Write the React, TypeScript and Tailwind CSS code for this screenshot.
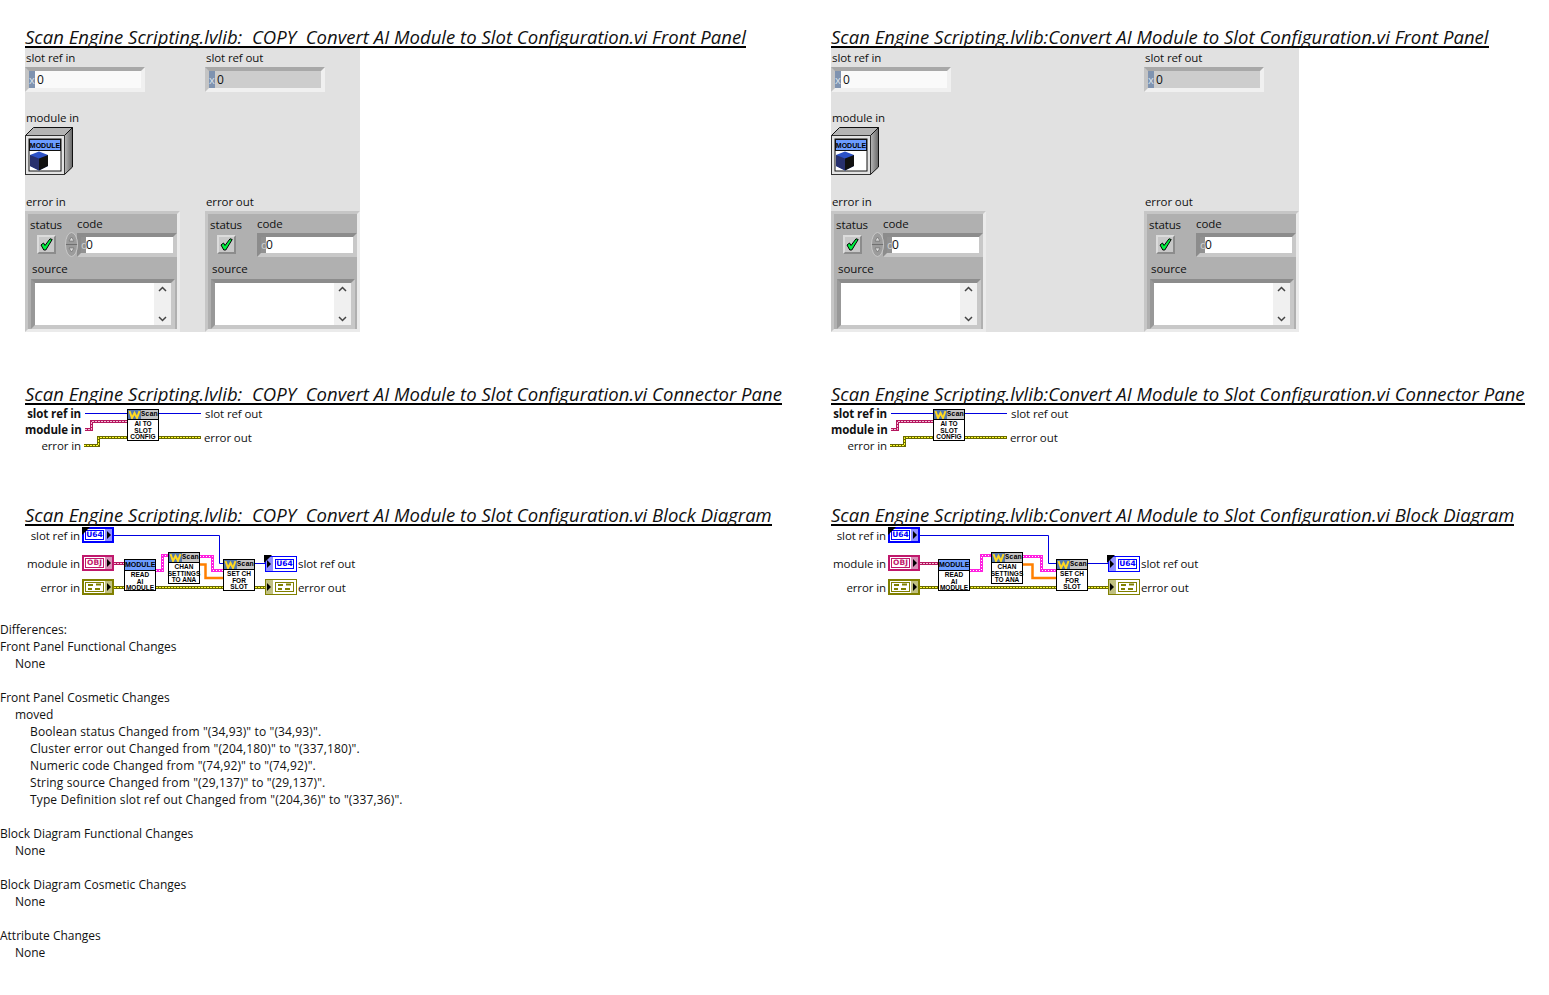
import React from 'react';

const UI_FONT = 'font-["Open_Sans",sans-serif]';

// --- front panel bits ---

const Caption = ({ children }: { children: React.ReactNode }) => (
  <div className="h-[16px] leading-[14px] text-[11.5px] tracking-[-0.1px] text-[#111] whitespace-nowrap">{children}</div>
);

const Label = ({ x, y, children }: { x: number; y: number; children: React.ReactNode }) => (
  <div
    className="absolute h-[16px] leading-[16px] text-[11.5px] tracking-[-0.1px] text-[#111] whitespace-nowrap"
    style={{ left: x, top: y - 8 }}
  >
    {children}
  </div>
);

const RightLabel = ({ y, w, children, bold }: { y: number; w: number; children: React.ReactNode; bold?: boolean }) => (
  <div
    className={`absolute left-0 h-[16px] leading-[16px] text-[11.5px] tracking-[-0.1px] text-[#111] text-right whitespace-nowrap ${bold ? 'font-bold' : ''}`}
    style={{ top: y - 8, width: w }}
  >
    {children}
  </div>
);

const RefNumeric = ({ indicator }: { indicator?: boolean }) => (
  <div
    className={`w-[120px] h-[25px] border-[4px] border-t-[#a8a8a8] border-l-[#c4c4c4] border-r-[#f0f0f0] border-b-[#f0f0f0] flex ${
      indicator ? 'bg-[#cdcdcd]' : 'bg-[#fafafa]'
    }`}
  >
    <div className="w-[6px] h-full bg-[#7f93b0] text-[#d8e0ea] text-[11px] leading-[17px] text-center">x</div>
    <div className="pl-[2px] text-[12px] leading-[17px] text-[#111]">0</div>
  </div>
);

const CheckBox = () => (
  <div className="w-[19px] h-[19px] bg-[#c8c8c8] border-[2px] border-t-[#dcdcdc] border-l-[#dcdcdc] border-r-[#8c8c8c] border-b-[#8c8c8c] flex items-center justify-center">
    <svg width="13" height="13" viewBox="0 0 13 13">
      <path d="M1 7 L3.5 5 L5 7.5 L10 0.8 L12.2 1.5 L5.8 12 L3.8 12 Z" fill="#00f040" stroke="#000" strokeWidth="1" />
    </svg>
  </div>
);

const Spinner = () => (
  <svg className="absolute left-[37px] top-[18px]" width="13" height="25" viewBox="0 0 13 25">
    <ellipse cx="6.5" cy="12.5" rx="6" ry="12" fill="#9c9c9c" stroke="#c8c8c8" />
    <path d="M1 12.5 H12" stroke="#707070" />
    <path d="M4 9 L6.5 5 L9 9 Z M4 16 L6.5 20 L9 16 Z" fill="#dcdcdc" stroke="#666" strokeWidth="0.6" />
  </svg>
);

const ErrorCluster = ({ spinner }: { spinner?: boolean }) => (
  <div className="relative w-[155px] h-[121px] bg-[#b0b0b0] border-[3px] border-t-[#c6c6c6] border-l-[#c6c6c6] border-r-[#ebebeb] border-b-[#ebebeb] flex flex-col">
    <div className="flex h-[43px]">
      <div className="w-[49px] pt-[4px] pl-[2px]">
        <Caption>status</Caption>
        <div className="mt-[1px] ml-[7px]">
          <CheckBox />
        </div>
      </div>
      <div className="w-[100px] pt-[3px]">
        <Caption>code</Caption>
        <div className="h-[24px] border-[4px] border-t-[#8c8c8c] border-l-[#8c8c8c] border-r-[#c8c8c8] border-b-[#c8c8c8] flex bg-white">
          <div className="w-[5px] h-full bg-[#919191] text-[#d0d0d0] text-[11px] leading-[16px]">d</div>
          <div className="text-[12px] leading-[16px] text-[#111]">0</div>
        </div>
      </div>
    </div>
    {spinner && <Spinner />}
    <div className="mt-[5px] pl-[4px]">
      <Caption>source</Caption>
    </div>
    <div className="mt-[1px] ml-[3px] w-[144px] h-[50px] border-[4px] border-t-[#8c8c8c] border-l-[#989898] border-r-[#c8c8c8] border-b-[#c8c8c8] bg-white flex justify-end">
      <div className="w-[17px] h-full bg-[#f0f0f0] flex flex-col items-center justify-between py-[3px]">
        <svg width="9" height="6" viewBox="0 0 9 6"><path d="M1 5 L4.5 1.5 L8 5" fill="none" stroke="#444" strokeWidth="1.5" /></svg>
        <svg width="9" height="6" viewBox="0 0 9 6"><path d="M1 1 L4.5 4.5 L8 1" fill="none" stroke="#444" strokeWidth="1.5" /></svg>
      </div>
    </div>
  </div>
);

const ModuleIcon = () => (
  <svg width="48" height="48" viewBox="0 0 48 48" className="block">
    <defs>
      <linearGradient id="side" x1="0" x2="1" y1="0" y2="0">
        <stop offset="0" stopColor="#b8b8b8" />
        <stop offset="1" stopColor="#666" />
      </linearGradient>
    </defs>
    <path d="M0.5 8.5 L8.5 0.5 H47.5 L39.5 8.5 Z" fill="#b4b4b4" stroke="#111" />
    <path d="M39.5 8.5 L47.5 0.5 V40 L39.5 47.5 Z" fill="url(#side)" stroke="#111" />
    <rect x="0.5" y="8.5" width="39" height="39" fill="#e4e4e4" stroke="#333" />
    <rect x="4" y="12" width="32" height="32" fill="#fff" stroke="#111" />
    <rect x="4.5" y="12.5" width="31" height="11" fill="#6c9cff" stroke="#111" />
    <text x="20" y="20.5" textAnchor="middle" fontFamily="'Liberation Sans', sans-serif" fontSize="7" fontWeight="bold" fill="#000">MODULE</text>
    <path d="M5 28 L14 24.5 L23 28 V39 L14 43.5 L5 39 Z" fill="#2c52c8" />
    <path d="M14 31.5 L23 28 V39 L14 43.5 Z" fill="#111" />
    <path d="M5 28 L14 31.5 V43.5 L5 39 Z" fill="#27306e" />
  </svg>
);

const FrontPanel = ({ width, outX }: { width: number; outX: number }) => (
  <div className="flex h-[284px] pt-[3px] bg-[#e1e1e1]" style={{ width }}>
    <div className="shrink-0" style={{ width: outX }}>
      <div className="pl-[1px]"><Caption>slot ref in</Caption></div>
      <RefNumeric />
      <div className="pl-[1px] mt-[19px]"><Caption>module in</Caption></div>
      <ModuleIcon />
      <div className="pl-[1px] mt-[20px]"><Caption>error in</Caption></div>
      <ErrorCluster spinner />
    </div>
    <div className="shrink-0">
      <div className="pl-[1px]"><Caption>slot ref out</Caption></div>
      <RefNumeric indicator />
      <div className="pl-[1px] mt-[103px]"><Caption>error out</Caption></div>
      <ErrorCluster />
    </div>
  </div>
);

// --- block diagram bits ---

const ScanHeader = () => (
  <div className="flex h-[10px] bg-[#c4c4c4] border-b border-black">
    <svg width="13" height="9" viewBox="0 0 13 9" className="shrink-0">
      <rect width="13" height="9" fill="#5478ac" />
      <path d="M1.5 1 L4 8 L6.5 3 L9 8 L11.5 1" fill="none" stroke="#ffd820" strokeWidth="2" />
    </svg>
    <span className="text-[7px] leading-[9px] font-bold text-black font-['Liberation_Mono',monospace]">Scan</span>
  </div>
);

const SubVI = ({ x, y, lines, module }: { x: number; y: number; lines: string[]; module?: boolean }) => (
  <div className="absolute w-[32px] h-[32px] bg-white border border-black" style={{ left: x, top: y }}>
    {module ? (
      <div className="h-[11px] bg-[#6c9cff] border-b border-black text-[7px] leading-[10px] font-bold text-center text-black font-['Liberation_Sans',sans-serif] whitespace-nowrap">
        MODULE
      </div>
    ) : (
      <ScanHeader />
    )}
    <div className="text-[6.5px] leading-[6.5px] pt-[1px] font-bold text-center text-black font-['Liberation_Sans',sans-serif] whitespace-nowrap flex flex-col items-center">
      {lines.map((l) => (
        <span key={l}>{l}</span>
      ))}
    </div>
  </div>
);

const ClusterGlyph = ({ color }: { color: string }) => (
  <svg width="19" height="10" viewBox="0 0 19 10" className="block">
    <rect x="0.5" y="0.5" width="18" height="9" fill="#fff" stroke={color} />
    <path d="M3 3 H8 M11 2.5 H16 M3 7 H7 M10 7 H15" stroke={color} strokeWidth="2" />
  </svg>
);

type TerminalProps = {
  x: number;
  y: number;
  color: string;
  pale: string;
  label?: string;
  cluster?: boolean;
  notch?: boolean;
  out?: boolean;
};

const Terminal = ({ x, y, color, pale, label, cluster, notch, out }: TerminalProps) => (
  <div
    className={`absolute w-[32px] h-[16px] bg-white flex items-center ${out ? 'border' : 'border-[2px]'}`}
    style={{ left: x, top: y, borderColor: color }}
  >
    {out && (
      <div className="w-[7px] h-full shrink-0 flex items-center" style={{ backgroundColor: pale }}>
        <svg width="5" height="8" viewBox="0 0 5 8"><path d="M1 0 L5 4 L1 8 Z" fill="#000" /></svg>
      </div>
    )}
    <div className="flex-1 flex justify-center">
      {cluster ? (
        <ClusterGlyph color={color} />
      ) : (
        <span
          className="w-[19px] h-[10px] border text-center text-[7.5px] leading-[8px] font-bold font-['DejaVu_Sans',sans-serif]"
          style={{ color, borderColor: color }}
        >
          {label}
        </span>
      )}
    </div>
    {!out && (
      <div className="w-[7px] h-full shrink-0 flex items-center justify-end" style={{ backgroundColor: pale }}>
        <svg width="5" height="8" viewBox="0 0 5 8"><path d="M0 0 L4 4 L0 8 Z" fill="#000" /></svg>
      </div>
    )}
    {notch && (
      <svg className="absolute left-[-2px] top-[-2px]" width="8" height="8" viewBox="0 0 8 8">
        <path d="M0 0 H8 L0 8 Z" fill="#000" />
      </svg>
    )}
  </div>
);

const BlueWire = ({ d }: { d: string }) => <path d={d} fill="none" stroke="#0000e0" strokeWidth="1" />;

const RefWire = ({ d }: { d: string }) => (
  <>
    <path d={d} fill="none" stroke="#b5175f" strokeWidth="3" />
    <path d={d} fill="none" stroke="#f4c0d8" strokeWidth="1" strokeDasharray="2 1" />
  </>
);

const ClusterWire = ({ d }: { d: string }) => (
  <>
    <path d={d} fill="none" stroke="#ff20e0" strokeWidth="3" />
    <path d={d} fill="none" stroke="#fff" strokeWidth="1" strokeDasharray="1 2" />
  </>
);

const ErrorWire = ({ d }: { d: string }) => (
  <>
    <path d={d} fill="none" stroke="#6a6a00" strokeWidth="3" />
    <path d={d} fill="none" stroke="#ffff30" strokeWidth="1" strokeDasharray="2 1" />
  </>
);

const OrangeWire = ({ d }: { d: string }) => <path d={d} fill="none" stroke="#ff8000" strokeWidth="2.5" />;

const ConnectorPane = () => (
  <div className="relative h-[50px]">
    <svg className="absolute left-0 top-0" width="200" height="50" viewBox="0 0 200 50">
      <BlueWire d="M60 8.5 H102 M134 8.5 H176" />
      <RefWire d="M60 24.5 H66.5 V16.5 H102" />
      <ErrorWire d="M59 40.5 H73.5 V32.5 H102" />
      <ErrorWire d="M134 32.5 H176" />
    </svg>
    <RightLabel y={9} w={56} bold>slot ref in</RightLabel>
    <RightLabel y={25} w={56} bold>module in</RightLabel>
    <RightLabel y={41} w={56}>error in</RightLabel>
    <SubVI x={102} y={4} lines={['AI TO', 'SLOT', 'CONFIG']} />
    <Label x={180} y={9}>slot ref out</Label>
    <Label x={179} y={33}>error out</Label>
  </div>
);

type DiagramLayout = {
  sub1: number;
  sub2: number;
  sub3: number;
  out: number;
  blueX: number;
  pinkA: number;
  pinkB: number;
  orangeX: number;
};

const BlockDiagram = ({ sub1, sub2, sub3, out, blueX, pinkA, pinkB, orangeX }: DiagramLayout) => (
  <div className="relative h-[75px]">
    <svg className="absolute left-0 top-0" width="500" height="75" viewBox="0 0 500 75">
      <BlueWire d={`M89 9.5 H${blueX}.5 V37.5 H${sub3}`} />
      <BlueWire d={`M${sub3 + 32} 37.5 H${out}`} />
      <RefWire d={`M89 37.5 H${sub1}`} />
      <ClusterWire d={`M${sub1 + 32} 44.5 H${pinkA}.5 V29.5 H${sub2}`} />
      <ClusterWire d={`M${sub2 + 32} 30.5 H${pinkB}.5 V44.5 H${sub3}`} />
      <OrangeWire d={`M${sub2 + 32} 38.5 H${orangeX}.5 V52 H${sub3}`} />
      <ErrorWire d={`M89 61.5 H${out}`} />
    </svg>
    <RightLabel y={10} w={55}>slot ref in</RightLabel>
    <RightLabel y={38} w={55}>module in</RightLabel>
    <RightLabel y={62} w={55}>error in</RightLabel>
    <Terminal x={57} y={1} color="#0000ff" pale="#9090ff" label="U64" notch />
    <Terminal x={57} y={29} color="#c0186c" pale="#d890b8" label="OBJ" />
    <Terminal x={57} y={53} color="#808000" pale="#c0c080" cluster />
    <SubVI x={sub1} y={33} lines={['READ', 'AI', 'MODULE']} module />
    <SubVI x={sub2} y={26} lines={['CHAN', 'SETTINGS', 'TO ANA']} />
    <SubVI x={sub3} y={33} lines={['SET CH', 'FOR', 'SLOT']} />
    <Terminal x={out} y={30} color="#0000ff" pale="#9090ff" label="U64" notch out />
    <Terminal x={out} y={53} color="#808000" pale="#c0c080" cluster out />
    <Label x={out + 33} y={38}>slot ref out</Label>
    <Label x={out + 33} y={62}>error out</Label>
  </div>
);

const Heading = ({ children }: { children: string }) => (
  <h2 className="w-fit h-[21px] border-b-2 border-black text-[18.5px] leading-[20px] italic text-[#111] whitespace-pre tracking-[0.02px]">
    {children}
  </h2>
);

const Column = ({
  prefix,
  panelWidth,
  outX,
  layout,
}: {
  prefix: string;
  panelWidth: number;
  outX: number;
  layout: DiagramLayout;
}) => (
  <div>
    <Heading>{`${prefix} Front Panel`}</Heading>
    <FrontPanel width={panelWidth} outX={outX} />
    <div className="mt-[52px]">
      <Heading>{`${prefix} Connector Pane`}</Heading>
    </div>
    <ConnectorPane />
    <div className="mt-[50px]">
      <Heading>{`${prefix} Block Diagram`}</Heading>
    </div>
    <BlockDiagram {...layout} />
  </div>
);

const DIFF_LINES: [number, string][] = [
  [0, 'Differences:'],
  [0, 'Front Panel Functional Changes'],
  [1, 'None'],
  [0, ''],
  [0, 'Front Panel Cosmetic Changes'],
  [1, 'moved'],
  [2, 'Boolean status Changed from "(34,93)" to "(34,93)".'],
  [2, 'Cluster error out Changed from "(204,180)" to "(337,180)".'],
  [2, 'Numeric code Changed from "(74,92)" to "(74,92)".'],
  [2, 'String source Changed from "(29,137)" to "(29,137)".'],
  [2, 'Type Definition slot ref out Changed from "(204,36)" to "(337,36)".'],
  [0, ''],
  [0, 'Block Diagram Functional Changes'],
  [1, 'None'],
  [0, ''],
  [0, 'Block Diagram Cosmetic Changes'],
  [1, 'None'],
  [0, ''],
  [0, 'Attribute Changes'],
  [1, 'None'],
];

export default function App() {
  return (
    <div className={`min-h-[995px] bg-white ${UI_FONT}`}>
      <div className="flex pt-[27px]">
        <div className="w-[831px] pl-[25px]">
          <Column
            prefix="Scan Engine Scripting.lvlib:  COPY  Convert AI Module to Slot Configuration.vi"
            panelWidth={335}
            outX={180}
            layout={{ sub1: 99, sub2: 143, sub3: 198, out: 240, blueX: 194, pinkA: 137, pinkB: 187, orangeX: 180 }}
          />
        </div>
        <div className="flex-1">
          <Column
            prefix="Scan Engine Scripting.lvlib:Convert AI Module to Slot Configuration.vi"
            panelWidth={468}
            outX={313}
            layout={{ sub1: 107, sub2: 160, sub3: 225, out: 277, blueX: 217, pinkA: 150, pinkB: 210, orangeX: 201 }}
          />
        </div>
      </div>
      <div className="mt-[20px] text-[12px] leading-[17px] text-[#111]">
        {DIFF_LINES.map(([indent, text], i) => (
          <div
            key={i}
            className={`h-[17px] whitespace-pre ${indent === 1 ? 'pl-[15px]' : indent === 2 ? 'pl-[30px] tracking-[0.13px]' : ''}`}
          >
            {text}
          </div>
        ))}
      </div>
    </div>
  );
}
